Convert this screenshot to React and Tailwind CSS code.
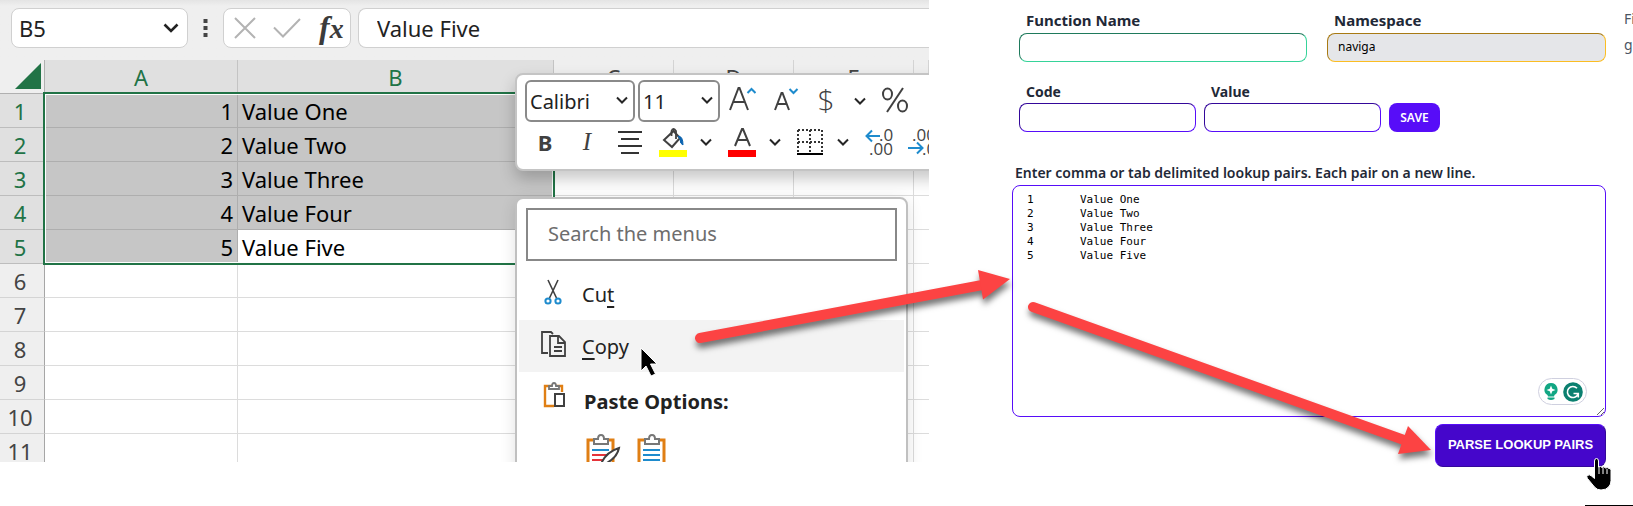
import React from "react";

const rows = [
  ["1", "Value One"],
  ["2", "Value Two"],
  ["3", "Value Three"],
  ["4", "Value Four"],
  ["5", "Value Five"],
  ["", ""],
  ["", ""],
  ["", ""],
  ["", ""],
  ["", ""],
  ["", ""],
];

function Chevron({ className = "" }) {
  return (
    <svg className={className} width="12" height="8" viewBox="0 0 12 8" fill="none" stroke="#262626" strokeWidth="2">
      <path d="M1 1.5 6 6.5 11 1.5" />
    </svg>
  );
}

function FormulaBar() {
  return (
    <div className="flex h-[60px] shrink-0 items-start bg-linear-to-b from-[#e4e4e4] to-[#efefef] to-10% pt-2 pl-[11px] text-[22px] text-[#222]">
      <label className="relative flex h-10 w-[177px] shrink-0 items-center rounded-lg border border-[#d0d0d0] bg-white">
        <input aria-label="Name box" defaultValue="B5" className="w-full bg-transparent pl-[7px] outline-none" />
        <svg className="mr-2 shrink-0" width="16" height="10" viewBox="0 0 16 10" fill="none" stroke="#222" strokeWidth="2.6">
          <path d="M1.5 1.5 8 8l6.500-6.500" />
        </svg>
      </label>
      <svg className="mx-[14px] mt-2.5 shrink-0" width="7" height="20" viewBox="0 0 7 20" fill="#444">
        <path d="M1.500 1h4v4h-4zM1.500 8h4v4h-4zM1.500 15h4v4h-4z" />
      </svg>
      <div className="flex h-10 w-32 shrink-0 items-center rounded-lg border border-[#d0d0d0] bg-white">
        <button aria-label="Cancel" className="ml-2.5 shrink-0">
          <svg width="22" height="22" viewBox="0 0 22 22" fill="none" stroke="#b3b3b3" strokeWidth="2">
            <path d="M1 1 21 21M21 1 1 21" />
          </svg>
        </button>
        <button aria-label="Enter" className="ml-[17px] shrink-0">
          <svg width="28" height="20" viewBox="0 0 28 20" fill="none" stroke="#b3b3b3" strokeWidth="2">
            <path d="M1 9.500 10 18.500 27 1" />
          </svg>
        </button>
        <button aria-label="Insert function" className="ml-[18px] flex shrink-0 items-baseline font-['Liberation_Serif',serif] text-[32px] leading-8 font-semibold italic text-[#3b3b3b]">
          f<span className="text-[28px]">x</span>
        </button>
      </div>
      <input
        aria-label="Formula bar"
        defaultValue="Value Five"
        className="ml-[7px] h-10 min-w-0 flex-1 rounded-l-lg border border-r-0 border-[#d0d0d0] bg-white pl-[18px] outline-none"
      />
    </div>
  );
}

function Sheet() {
  return (
    <div className="relative">
      <table className="w-full table-fixed border-separate border-spacing-0 text-[22px] leading-8 text-black">
        <colgroup>
          <col className="w-[45px]" />
          <col className="w-[193px]" />
          <col className="w-[316px]" />
          <col className="w-[120px]" />
          <col className="w-[120px]" />
          <col className="w-[120px]" />
          <col />
        </colgroup>
        <thead>
          <tr className="h-[34px] text-[#217346]">
            <th className="border-r border-b border-[#b0b0b0] bg-[#efefef] p-0">
              <svg className="ml-[15px]" width="27" height="27" viewBox="0 0 27 27" fill="#217346">
                <path d="M26 0V26H0z" />
              </svg>
            </th>
            <th className="border-r border-b border-[#c4c4c4] bg-[#e0e0e0] p-0 font-normal">A</th>
            <th className="border-r border-b border-[#c4c4c4] bg-[#e0e0e0] p-0 font-normal">B</th>
            {["C", "D", "E", ""].map((c) => (
              <th key={c} className="border-r border-b border-[#d4d4d4] bg-[#efefef] p-0 font-normal text-[#444]">{c}</th>
            ))}
          </tr>
        </thead>
        <tbody>
          {rows.map(([a, b], i) => {
            const picked = i < 5;
            const cell = "border-r border-b p-0 ";
            return (
              <tr key={i} className="h-[34px]">
                <th className={"border-r border-b border-r-[#a6a6a6] p-0 pr-1 font-normal " + (picked ? "border-b-[#bdbdbd] bg-[#e0e0e0] text-[#217346]" : "border-b-[#d4d4d4] bg-[#efefef] text-[#444]")}>
                  {i + 1}
                </th>
                <td className={cell + "pr-1 text-right " + (picked ? "border-[#aeaeae] bg-[#c6c6c6]" : "border-[#dcdcdc]")}>{a}</td>
                <td className={cell + "pl-1 " + (i < 4 ? "border-[#aeaeae] bg-[#c6c6c6]" : "border-[#dcdcdc]")}>{b}</td>
                <td className={cell + "border-[#dcdcdc]"} />
                <td className={cell + "border-[#dcdcdc]"} />
                <td className={cell + "border-[#dcdcdc]"} />
                <td className="border-b border-[#dcdcdc] p-0" />
              </tr>
            );
          })}
        </tbody>
      </table>
      <div className="pointer-events-none absolute top-8 left-[43px] h-[173px] w-[512px] border-2 border-[#217346] ring-1 ring-white ring-inset" />
    </div>
  );
}

function DecimalIcon({ left }) {
  return (
    <svg width="28" height="28" viewBox="0 0 28 28" fontFamily="'Open Sans',sans-serif" fontSize="17" fill="#444">
      {left ? (
        <>
          <text x="14" y="13">.0</text>
          <text x="4" y="27">.00</text>
          <path d="M1 8h14M7 2.500 1.500 8 7 13.500" fill="none" stroke="#1e8bcd" strokeWidth="2" />
        </>
      ) : (
        <>
          <text x="4" y="13">.00</text>
          <text x="14" y="27">.0</text>
          <path d="M0 20h14M9 14.500 14.500 20 9 25.500" fill="none" stroke="#1e8bcd" strokeWidth="2" />
        </>
      )}
    </svg>
  );
}

function MiniToolbar() {
  return (
    <div className="absolute top-[73px] left-[515px] h-[98px] w-[460px] rounded-lg border-2 border-[#c4c4c4] bg-white pt-[5px] pl-2 text-[#404040] shadow-[0_8px_16px_rgba(0,0,0,0.22)]">
      <div className="flex h-[42px] items-center">
        <button aria-label="Font" className="flex h-[42px] w-[110px] shrink-0 items-center justify-between rounded-md border-2 border-[#8a8a8a] px-[3px] pt-0.5 text-[20px] text-[#222]">
          Calibri <Chevron className="mr-0.5 mb-1" />
        </button>
        <button aria-label="Font size" className="ml-[3px] flex h-[42px] w-[82px] shrink-0 items-center justify-between rounded-md border-2 border-[#8a8a8a] px-[3px] pt-0.5 text-[20px] text-[#222]">
          11 <Chevron className="mr-0.5 mb-1" />
        </button>
        <button aria-label="Increase font size" className="mb-1 ml-[9px] shrink-0">
          <svg width="27" height="26" viewBox="0 0 27 26" fill="none" stroke="#404040" strokeWidth="2">
            <path d="M1 24 9.500 2h1L19 24M4.500 16h11" />
            <path d="M18.500 7 22.500 3l4 4" stroke="#1e8bcd" />
          </svg>
        </button>
        <button aria-label="Decrease font size" className="mb-1 ml-[18px] shrink-0">
          <svg width="25" height="26" viewBox="0 0 25 26" fill="none" stroke="#404040" strokeWidth="2">
            <path d="M1 24 7.500 7h1L15 24M3.500 18h9" />
            <path d="M15.500 3l4 4 4-4" stroke="#1e8bcd" />
          </svg>
        </button>
        <button aria-label="Accounting format" className="mb-0.5 ml-[17px] w-5 shrink-0 font-['Open_Sans',sans-serif] text-[30px] leading-8 font-light">$</button>
        <button aria-label="Currency options" className="ml-[18px] shrink-0"><Chevron /></button>
        <button aria-label="Percent" className="mb-0.5 ml-[15px] shrink-0">
          <svg width="28" height="28" viewBox="0 0 28 28" fill="none" stroke="#404040" strokeWidth="2">
            <ellipse cx="6.500" cy="8" rx="4.500" ry="5.500" />
            <ellipse cx="21.500" cy="20" rx="4.500" ry="5.500" />
            <path d="M22 2 6 26" />
          </svg>
        </button>
      </div>
      <div className="flex h-10 items-center">
        <button className="ml-3 w-4 shrink-0 text-[22px] leading-7 font-bold">B</button>
        <button className="ml-[26px] w-4 shrink-0 font-['Liberation_Serif',serif] text-[25px] leading-7 italic">I</button>
        <button aria-label="Center" className="ml-[22px] shrink-0">
          <svg width="26" height="26" viewBox="0 0 26 26" stroke="#333" strokeWidth="2">
            <path d="M1 3h24M4 10h18M1 17h24M4 24h18" />
          </svg>
        </button>
        <button aria-label="Fill color" className="ml-4 shrink-0">
          <svg width="28" height="30" viewBox="0 0 28 30" fill="none">
            <path d="M0 23h28v7H0z" fill="#ff0" />
            <path d="M5 13 14.500 4 21 11 13 20z" fill="#fafafa" stroke="#404040" strokeWidth="2" />
            <path d="M12.500 9V4q1.500-4 4.500 0v8" stroke="#404040" strokeWidth="1.800" />
            <path d="M19 9q5 0 5 9-3-1-3-6z" fill="#0a63b0" stroke="#0a63b0" />
          </svg>
        </button>
        <button aria-label="Fill options" className="ml-[13px] shrink-0"><Chevron /></button>
        <button aria-label="Font color" className="ml-4 shrink-0">
          <svg width="28" height="30" viewBox="0 0 28 30" fill="none">
            <path d="M0 23h28v7H0z" fill="red" />
            <path d="M7 19 14 2h1l7 17M9.500 13h10" stroke="#404040" strokeWidth="2" />
          </svg>
        </button>
        <button aria-label="Font color options" className="ml-[13px] shrink-0"><Chevron /></button>
        <button aria-label="Borders" className="ml-[15px] shrink-0">
          <svg width="28" height="28" viewBox="0 0 28 28" fill="none" stroke="#333">
            <path d="M2 2h24M2 14h24M2 2v22M26 2v22M14 2v22" strokeWidth="2" strokeDasharray="2 2" />
            <path d="M1 26h26" strokeWidth="2" stroke="#000" />
          </svg>
        </button>
        <button aria-label="Border options" className="ml-[13px] shrink-0"><Chevron /></button>
        <button aria-label="Increase decimal" className="ml-4 shrink-0"><DecimalIcon left /></button>
        <button aria-label="Decrease decimal" className="ml-[15px] shrink-0"><DecimalIcon /></button>
      </div>
    </div>
  );
}

function Clipboard({ kind }) {
  return (
    <svg width="36" height="40" viewBox="0 0 36 40" fill="none">
      <path d="M3 6h25v33H3z" fill="#fff" stroke="#e07f14" strokeWidth="3" />
      <path d="M9 10V5h4q0-4 3-4t3 4h4v5z" fill="#fff" stroke="#777" strokeWidth="2" />
      <path d="M7 16h17" stroke="#1e8bcd" strokeWidth="2" />
      <path d="M7 21h17M7 26h17M7 31h17" stroke={kind === "source" ? "#e5343a" : "#1e8bcd"} strokeWidth="2" />
      {kind === "source" && <path d="M16 30q5-12 18-16-2 10-14 16z" fill="#fff" stroke="#404040" strokeWidth="2" />}
    </svg>
  );
}

function ContextMenu() {
  return (
    <div className="absolute top-[197px] left-[515px] h-[290px] w-[393px] rounded-lg border-2 border-[#c0c0c0] bg-white pt-[9px] text-[20px] text-[#222] shadow-[0_4px_16px_rgba(0,0,0,0.12)]">
      <div className="px-[9px]">
        <input
          aria-label="Search the menus"
          placeholder="Search the menus"
          className="h-[53px] w-full border-2 border-[#888] pb-0.5 pl-5 outline-none placeholder:text-[#6d6d6d]"
        />
      </div>
      <button className="mt-[7px] flex h-[52px] w-full items-center">
        <svg className="mb-1 ml-[27px]" width="18" height="26" viewBox="0 0 18 26" fill="none" stroke="#404040" strokeWidth="1.600">
          <path d="M4 1 12.500 19M14 1 5.500 19" />
          <circle cx="4" cy="22" r="2.600" stroke="#1e8bcd" strokeWidth="2" />
          <circle cx="14" cy="22" r="2.600" stroke="#1e8bcd" strokeWidth="2" />
        </svg>
        <span className="ml-5 pt-0.5">Cu<u className="underline-offset-4">t</u></span>
      </button>
      <button className="mx-0.5 flex h-[52px] w-[385px] items-center bg-[#f3f3f3]">
        <svg className="mb-1 ml-5" width="28" height="28" viewBox="0 0 28 28" fill="none" stroke="#404040" strokeWidth="1.800">
          <path d="M9 23H3V2h9l2 2" />
          <path d="M11 6h9l6 6v14H11zM19 6v7h7M15 17h8M15 21h8" />
        </svg>
        <span className="ml-[15px] pt-0.5"><u className="underline-offset-4">C</u>opy</span>
      </button>
      <div className="flex h-[58px] items-center">
        <svg className="mb-3 ml-[26px]" width="24" height="27" viewBox="0 0 24 27" fill="none">
          <path d="M11 24H2V4h17v6" stroke="#e07f14" strokeWidth="2.400" />
          <path d="M6 7V4h3q0-3 2-3t2 3h3v3z" fill="#fff" stroke="#777" strokeWidth="1.800" />
          <path d="M12 12h9v12h-9z" fill="#fff" stroke="#404040" strokeWidth="2" />
        </svg>
        <span className="ml-[17px] pt-0.5 font-bold">Paste Options:</span>
      </div>
      <div className="flex gap-[15px] pt-1 pl-[68px]">
        <button aria-label="Keep source formatting"><Clipboard kind="source" /></button>
        <button aria-label="Paste"><Clipboard /></button>
      </div>
    </div>
  );
}

function LookupForm() {
  const label = "pl-[7px] font-bold text-[#1f2937]";
  return (
    <form className="flex min-w-0 flex-1 flex-col pt-2.5 pr-[27px] pl-[83px] font-['Noto_Sans','Open_Sans',sans-serif]">
      <div className="flex gap-5 pl-[7px]">
        <div className="flex w-[288px] shrink-0 flex-col">
          <label htmlFor="fn" className={label + " h-[23px] text-[15px] leading-5"}>Function Name</label>
          <input id="fn" className="h-[29px] rounded-lg border border-t-[#1f7a5c] border-r-[#36d399] border-b-[#36d399] border-l-[#1f7a5c]" />
        </div>
        <div className="flex min-w-0 flex-1 flex-col">
          <label htmlFor="ns" className={label + " h-[23px] text-[15px] leading-5"}>Namespace</label>
          <input id="ns" defaultValue="naviga" className="h-[29px] rounded-lg border border-t-[#a87a14] border-r-[#fbbd23] border-b-[#fbbd23] border-l-[#a87a14] bg-[#e5e6e9] pb-0.5 pl-2.5 text-[12px] text-black" />
        </div>
      </div>
      <div className="mt-5 flex items-end gap-2 pl-[7px]">
        <div className="flex w-[177px] flex-col">
          <label htmlFor="code" className={label + " h-[21px] text-[14px] leading-5"}>Code</label>
          <input id="code" className="h-[29px] rounded-lg border border-t-[#34089a] border-r-[#570df8] border-b-[#570df8] border-l-[#34089a]" />
        </div>
        <div className="flex w-[177px] flex-col">
          <label htmlFor="value" className={label + " h-[21px] text-[14px] leading-5"}>Value</label>
          <input id="value" className="h-[29px] rounded-lg border border-t-[#34089a] border-r-[#570df8] border-b-[#570df8] border-l-[#34089a]" />
        </div>
        <button type="button" className="h-[29px] w-[51px] rounded-lg bg-[#570df8] text-[12px] font-semibold text-white">SAVE</button>
      </div>
      <label htmlFor="pairs" className="mt-[31px] h-[22px] pl-[3px] text-[14px] leading-5 font-semibold text-[#1f2937]">
        Enter comma or tab delimited lookup pairs. Each pair on a new line.
      </label>
      <div className="relative flex">
        <textarea
          id="pairs"
          defaultValue={"1\tValue One\n2\tValue Two\n3\tValue Three\n4\tValue Four\n5\tValue Five"}
          className="h-[232px] w-full rounded-lg border border-[#570df8] bg-white px-3.5 py-[7px] font-['DejaVu_Sans_Mono',monospace] text-[11px] leading-[14px] text-black outline-none [tab-size:8]"
        />
        <div className="absolute right-[19px] bottom-3 flex h-[27px] w-[49px] items-center justify-center gap-1 rounded-full border border-[#cfd0df] bg-white">
          <svg width="16" height="19" viewBox="0 0 16 19" fill="#11a683">
            <path d="M8 1a6.500 6.500 0 0 0-3.500 12l.5 1.500h6l.5-1.500A6.500 6.500 0 0 0 8 1zM4.500 15.500h7v1.500q-3.500 2-7 0z" />
            <path d="M8 3.500 9.300 6.700 12.500 8 9.300 9.300 8 12.500 6.700 9.300 3.500 8 6.700 6.700z" fill="#fff" />
          </svg>
          <svg width="20" height="20" viewBox="0 0 20 20" fill="none">
            <circle cx="10" cy="10" r="9.800" fill="#0b8070" />
            <path d="M14 6.300A5.500 5.500 0 1 0 15 12M10.500 11.500h4.800v4" stroke="#fff" strokeWidth="1.600" />
          </svg>
        </div>
      </div>
      <button type="button" className="mt-[7px] h-[43px] w-[171px] self-end rounded-lg border border-t-[#570df8] border-r-[#34089a] border-b-[#34089a] border-l-[#570df8] bg-[#4506cb] pb-0.5 font-['Liberation_Sans',sans-serif] text-[13px] font-bold text-white">
        PARSE LOOKUP PAIRS
      </button>
    </form>
  );
}

export default function App() {
  return (
    <main className="relative flex min-h-screen items-start overflow-hidden bg-white font-['Noto_Sans','Open_Sans',sans-serif]">
      <section className="relative h-[462px] w-[929px] shrink-0 overflow-hidden bg-white">
        <FormulaBar />
        <Sheet />
        <MiniToolbar />
        <ContextMenu />
        <svg className="absolute top-[346px] left-[639px]" width="22" height="33" viewBox="0 0 22 33">
          <path d="M2 2v23l5-5 5 10 4.500-2-5-10H18z" fill="#000" stroke="#fff" />
        </svg>
      </section>
      <LookupForm />
      <p className="absolute top-1.5 left-[1624px] w-40 text-[14px] leading-[26px] text-[#4b5563]">Fi<br />g</p>
      <svg className="pointer-events-none absolute top-0 left-0" width="1633" height="506" viewBox="0 0 1633 506">
        <g fill="#fc4343" stroke="#fc4343" className="drop-shadow-[1px_5px_3px_rgba(0,0,0,0.55)]">
          <path d="M700 338 985 284.500" strokeWidth="10" strokeLinecap="round" />
          <path d="M1010 279 978 270 983 299.500z" stroke="none" />
          <path d="M1033 307 1404 440" strokeWidth="10" strokeLinecap="round" />
          <path d="M1431 450 1408 426 1398 454z" stroke="none" />
        </g>
        <path d="M1585 505.500h48" stroke="#000" />
        <path
          d="M1594.500 461q0-2.500 2-2.500t2 2.500v6q1.800-1.500 3.500.5 2-1.500 3.500.5 2-1 3.500.5 2-.5 2 2v10q0 4-2 6-2.500 3.500-8 3.500-4 0-6.500-3l-7-8.500q-1.500-2 0-3 2-1.500 4 .5l3 2.500z"
          fill="#000"
          stroke="#fff"
        />
        <path d="M1599 467v7M1603 468v6M1607 469v5" stroke="#fff" />
      </svg>
    </main>
  );
}
